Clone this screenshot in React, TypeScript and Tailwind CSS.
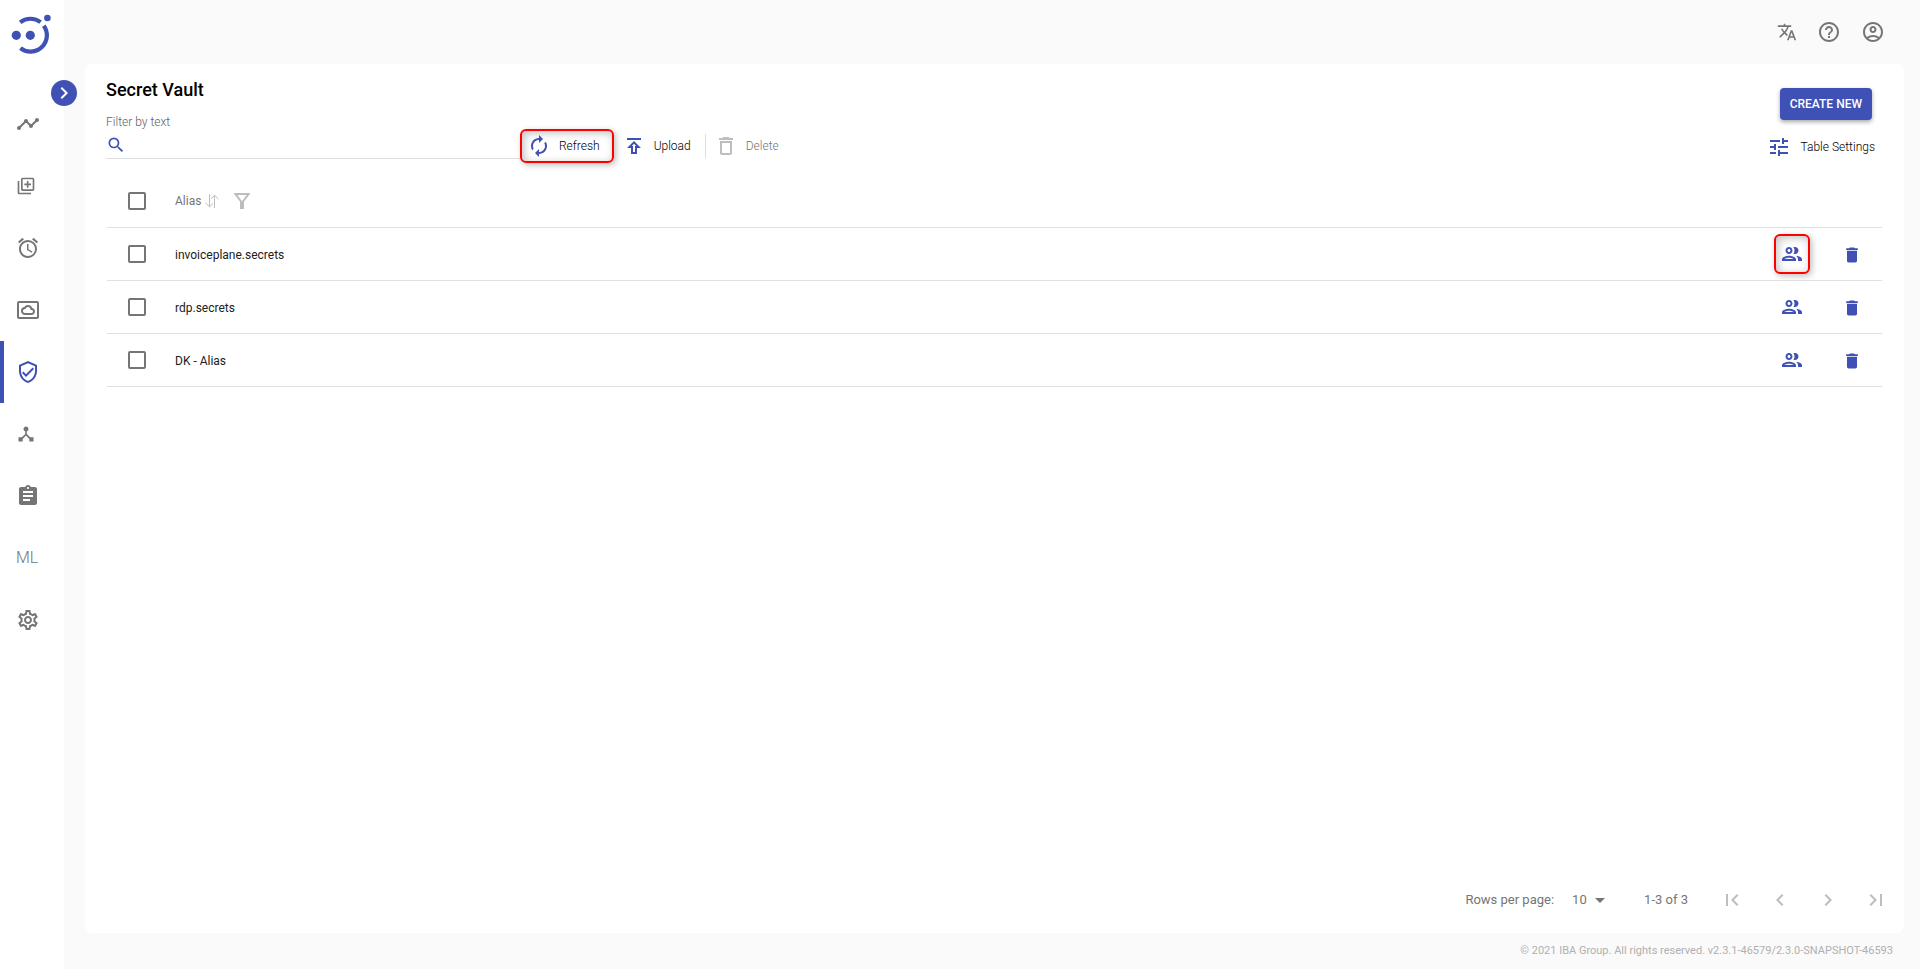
import { useState } from "react";
import type { ReactNode } from "react";
import {
  MdAlarm,
  MdArrowDropDown,
  MdAssignment,
  MdAutorenew,
  MdChevronLeft,
  MdChevronRight,
  MdDelete,
  MdDeleteOutline,
  MdDeviceHub,
  MdFirstPage,
  MdHelpOutline,
  MdLastPage,
  MdOutlineAccountCircle,
  MdOutlineGroup,
  MdOutlineLibraryAdd,
  MdOutlinePublish,
  MdOutlineSettings,
  MdOutlineSettingsSystemDaydream,
  MdOutlineVerifiedUser,
  MdSearch,
  MdTimeline,
  MdTranslate,
  MdTune,
} from "react-icons/md";

const secrets = ["invoiceplane.secrets", "rdp.secrets", "DK - Alias"];

const navItems: { label: string; icon: ReactNode; active?: boolean }[] = [
  { label: "Dashboard", icon: <MdTimeline size={24} /> },
  { label: "Automation processes", icon: <MdOutlineLibraryAdd size={20} /> },
  { label: "Scheduler", icon: <MdAlarm size={24} /> },
  { label: "Storage", icon: <MdOutlineSettingsSystemDaydream size={24} /> },
  { label: "Secret vault", icon: <MdOutlineVerifiedUser size={24} />, active: true },
  { label: "Nodes", icon: <MdDeviceHub size={20} /> },
  { label: "Human tasks", icon: <MdAssignment size={24} /> },
  { label: "Machine learning", icon: <span className="text-base font-light">ML</span> },
  { label: "Administration", icon: <MdOutlineSettings size={24} /> },
];

const checkboxClass =
  "block size-[18px] appearance-none rounded-xs border-2 border-[#757575] bg-white checked:bg-[#3f51b5]";

function Logo() {
  return (
    <svg width="64" height="64" viewBox="0 0 64 64" fill="none" className="text-[#3f51b5]">
      <g stroke="currentColor" strokeWidth="4.2">
        <path d="M20.2 22.4A16.4 16.4 0 0 1 40.6 22.2" />
        <path d="M43.8 25.7A16.4 16.4 0 0 1 20.4 48.2" />
      </g>
      <g fill="currentColor">
        <circle cx="16.3" cy="35.3" r="4.6" />
        <circle cx="30.3" cy="35.3" r="4.6" />
        <circle cx="47.4" cy="18" r="3.3" />
      </g>
    </svg>
  );
}

function Sidebar() {
  return (
    <aside className="relative w-16 shrink-0 bg-white">
      <a href="#" aria-label="Home" className="block h-[93px]">
        <Logo />
      </a>
      <button
        aria-label="Expand menu"
        className="absolute top-20 -right-[13px] flex size-[26px] items-center justify-center rounded-full bg-[#3f51b5] text-white"
      >
        <MdChevronRight size={24} />
      </button>
      <nav>
        {navItems.map((item) => (
          <a
            key={item.label}
            href="#"
            aria-label={item.label}
            className={
              item.active
                ? "flex h-[62px] items-center border-l-4 border-[#3f51b5] pl-3 text-[#3f51b5]"
                : "flex h-[62px] items-center border-l-4 border-transparent pl-3 text-[#757575]"
            }
          >
            {item.icon}
          </a>
        ))}
      </nav>
    </aside>
  );
}

function Topbar() {
  return (
    <header className="flex h-16 items-center justify-end gap-5 pr-[35px] text-[#757575]">
      <button aria-label="Language">
        <MdTranslate size={20} />
      </button>
      <button aria-label="Help">
        <MdHelpOutline size={24} />
      </button>
      <button aria-label="Account">
        <MdOutlineAccountCircle size={24} />
      </button>
    </header>
  );
}

function Toolbar() {
  return (
    <div className="flex justify-between pr-[22px] pl-[21px]">
      <div className="pt-3.5">
        <h1 className="text-lg/6 font-medium text-black">Secret Vault</h1>
        <div className="mt-[11px] flex items-start">
          <div className="w-[414px]">
            <label htmlFor="filter" className="block pt-px text-xs/4 font-light text-[#616161]">
              Filter by text
            </label>
            <div className="flex h-[29px] items-center border-b border-[#e0e0e0] pt-px">
              <MdSearch size={20} className="shrink-0 text-[#3f51b5]" />
              <input id="filter" type="text" className="w-full px-2 text-xs outline-none" />
            </div>
          </div>
          <div className="mt-4 flex items-center text-xs font-light text-black">
            <button className="flex h-[34px] items-center gap-2 rounded-md border-2 border-[#f00] pr-3 pl-[5px] shadow-[2px_2px_6px_rgba(0,0,0,0.25),inset_2px_2px_8px_rgba(0,0,0,0.25)]">
              <MdAutorenew size={24} className="text-[#3f51b5]" />
              Refresh
            </button>
            <button className="flex items-center gap-2 pr-3.5 pl-2">
              <MdOutlinePublish size={24} className="text-[#3f51b5]" />
              Upload
            </button>
            <button
              disabled
              className="flex h-6 items-center gap-2 border-l border-[#e0e0e0] pl-2 text-[#757575]"
            >
              <MdDeleteOutline size={24} className="text-[#bdbdbd]" />
              Delete
            </button>
          </div>
        </div>
      </div>
      <div className="flex flex-col items-end pt-6">
        <button className="mr-2.5 h-8 rounded-sm bg-[#3f51b5] px-2.5 text-xs font-medium text-white shadow-[0_2px_4px_rgba(0,0,0,0.35)]">
          CREATE NEW
        </button>
        <button className="mt-[15px] mr-[7px] flex items-center gap-2.5 text-xs font-light text-black">
          <MdTune size={24} className="text-[#3f51b5]" />
          Table Settings
        </button>
      </div>
    </div>
  );
}

function SecretsTable() {
  return (
    <div className="mt-[11px] flex-1 pr-[22px] pl-[22px]">
      <table className="w-full border-collapse text-left text-xs text-[#212121]">
        <thead>
          <tr className="h-[53px] border-b border-[#e0e0e0] text-[#757575]">
            <th className="w-[68px] pt-0.5 pl-[21px]">
              <input type="checkbox" aria-label="Select all" className={checkboxClass} />
            </th>
            <th className="pt-0.5 font-normal">
              <div className="flex items-center">
                Alias
                <button aria-label="Sort by alias" className="ml-1 text-[#bdbdbd]">
                  <svg width="14" height="14" viewBox="0 0 14 14" fill="none" stroke="currentColor">
                    <path d="M4.500 0v12.500M.5 9l4 3.800L8 9.500M9.500 14V1.500M6 5l3.500-3.800L13.500 5" />
                  </svg>
                </button>
                <button aria-label="Filter by alias" className="ml-[15px] text-[#bdbdbd]">
                  <svg width="16" height="16" viewBox="0 0 16 16" fill="none" stroke="currentColor" strokeWidth="2">
                    <path d="M1.500 1h13L9 8.500V15H7V8.500z" />
                  </svg>
                </button>
              </div>
            </th>
            <th className="w-[60px]" />
            <th className="w-[60px]" />
          </tr>
        </thead>
        <tbody>
          {secrets.map((alias, index) => (
            <tr key={alias} className="h-[53px] border-b border-[#e0e0e0]">
              <td className="pl-[21px]">
                <input type="checkbox" aria-label={`Select ${alias}`} className={checkboxClass} />
              </td>
              <td className="pt-0.5">{alias}</td>
              <td>
                <button
                  aria-label={`Share ${alias}`}
                  className={
                    index === 0
                      ? "mx-auto flex h-10 w-9 items-center justify-center rounded-md border-2 border-[#f00] text-[#3f51b5] shadow-[2px_2px_6px_rgba(0,0,0,0.25),inset_2px_2px_8px_rgba(0,0,0,0.25)]"
                      : "mx-auto flex h-10 w-9 items-center justify-center text-[#3f51b5]"
                  }
                >
                  <MdOutlineGroup size={24} />
                </button>
              </td>
              <td className="pt-0.5">
                <button aria-label={`Delete ${alias}`} className="mx-auto block text-[#3f51b5]">
                  <MdDelete size={20} />
                </button>
              </td>
            </tr>
          ))}
        </tbody>
      </table>
    </div>
  );
}

function Pagination() {
  const [rows, setRows] = useState("10");

  return (
    <div className="flex h-[66px] items-center justify-end pr-1 text-[13px] text-[#757575]">
      <label htmlFor="rows">Rows per page:</label>
      <div className="relative ml-[18px]">
        <select
          id="rows"
          value={rows}
          onChange={(e) => setRows(e.target.value)}
          className="block w-10 appearance-none outline-none"
        >
          <option value="10">10</option>
          <option value="25">25</option>
          <option value="50">50</option>
        </select>
        <MdArrowDropDown size={24} className="pointer-events-none absolute -top-0.5 right-0" />
      </div>
      <span className="mr-5 ml-8">1-3 of 3</span>
      <div className="flex text-[#bdbdbd]">
        <button disabled aria-label="First page" className="flex size-12 items-center justify-center">
          <MdFirstPage size={24} />
        </button>
        <button disabled aria-label="Previous page" className="flex size-12 items-center justify-center">
          <MdChevronLeft size={24} />
        </button>
        <button disabled aria-label="Next page" className="flex size-12 items-center justify-center">
          <MdChevronRight size={24} />
        </button>
        <button disabled aria-label="Last page" className="flex size-12 items-center justify-center">
          <MdLastPage size={24} />
        </button>
      </div>
    </div>
  );
}

export default function App() {
  return (
    <div className="flex min-h-screen bg-[#fafafa] font-[Roboto,sans-serif]">
      <Sidebar />
      <div className="flex min-w-0 flex-1 flex-col">
        <Topbar />
        <main className="mr-4 ml-[21px] flex flex-1 flex-col rounded-lg bg-white">
          <Toolbar />
          <SecretsTable />
          <Pagination />
        </main>
        <footer className="flex h-9 items-center justify-end pr-[27px] text-[11px] text-[#b0b0b0]">
          © 2021 IBA Group. All rights reserved. v2.3.1-46579/2.3.0-SNAPSHOT-46593
        </footer>
      </div>
    </div>
  );
}
